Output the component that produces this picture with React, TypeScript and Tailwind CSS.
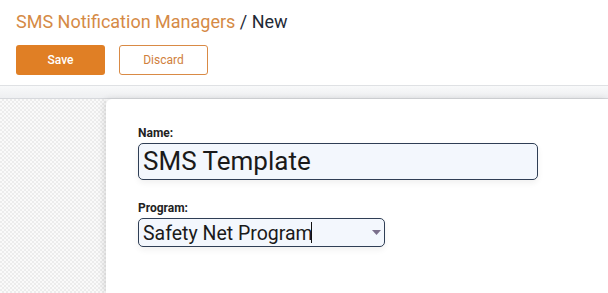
import { useState } from 'react';

export default function App() {
  const [name, setName] = useState('SMS Template');
  const [program, setProgram] = useState('Safety Net Program');

  return (
    <div className="h-[293px] w-[608px] overflow-hidden bg-white font-['Roboto',sans-serif]">
      {/* control panel */}
      <div className="h-[86px] border-b border-[#dfe1e4] px-4 pt-[11px]">
        <div className="text-[18px] leading-[22px]">
          <span className="text-[#d58a45]">SMS Notification Managers</span>
          <span className="text-[#1f2a37]"> / New</span>
        </div>
        <div className="mt-[12px] flex gap-[14px]">
          <button className="h-[30px] w-[89px] rounded-[3px] bg-[#e07f25] text-[12px] font-medium text-white">
            Save
          </button>
          <button className="h-[30px] w-[89px] rounded-[3px] border border-[#d98a45] bg-white text-[12px] text-[#d0803c]">
            Discard
          </button>
        </div>
      </div>
      <div className="h-[13px] border-b border-[#d6d8dc] bg-gradient-to-b from-[#f8f9fa] to-[#eeeff1]" />

      {/* form sheet */}
      <div className="flex h-[194px]">
        <div className="w-[106px] bg-[repeating-conic-gradient(#ececec_0%_25%,#fafafa_0%_50%)] bg-[length:4px_4px]" />
        <div className="flex-1 rounded-tl-[6px] bg-white pl-[32px] pt-[27px] shadow-[-2px_0_6px_rgba(0,0,0,0.12)]">
          <label className="block text-[12px] font-bold leading-[14px] text-[#222]">Name:</label>
          <input
            value={name}
            onChange={e => setName(e.target.value)}
            className="mt-[3px] h-[37px] w-[400px] rounded-[5px] border border-[#2f3e55] bg-[#f3f7fd] px-[4px] text-[26px] text-[#1a1a1a] shadow-[0_3px_6px_rgba(0,0,0,0.06)] outline-none"
          />
          <label className="mt-[21px] block text-[12px] font-bold leading-[14px] text-[#222]">Program:</label>
          <div className="relative mt-[3px] h-[29px] w-[247px]">
            <select
              value={program}
              onChange={e => setProgram(e.target.value)}
              className="h-full w-full appearance-none rounded-[5px] border border-[#2f3e55] bg-[#f3f7fd] pl-[4px] text-[19.5px] text-[#1a1a1a] shadow-[0_3px_6px_rgba(0,0,0,0.06)] outline-none"
            >
              <option>Safety Net Program</option>
            </select>
            <span className="pointer-events-none absolute left-[173px] top-[4px] h-[21px] w-[1px] bg-[#111]" />
            <svg className="pointer-events-none absolute right-[4px] top-[12px]" width="9" height="5" viewBox="0 0 9 5">
              <path d="M0 0h9L4.5 5z" fill="#7a6f8c" />
            </svg>
          </div>
        </div>
      </div>
    </div>
  );
}
